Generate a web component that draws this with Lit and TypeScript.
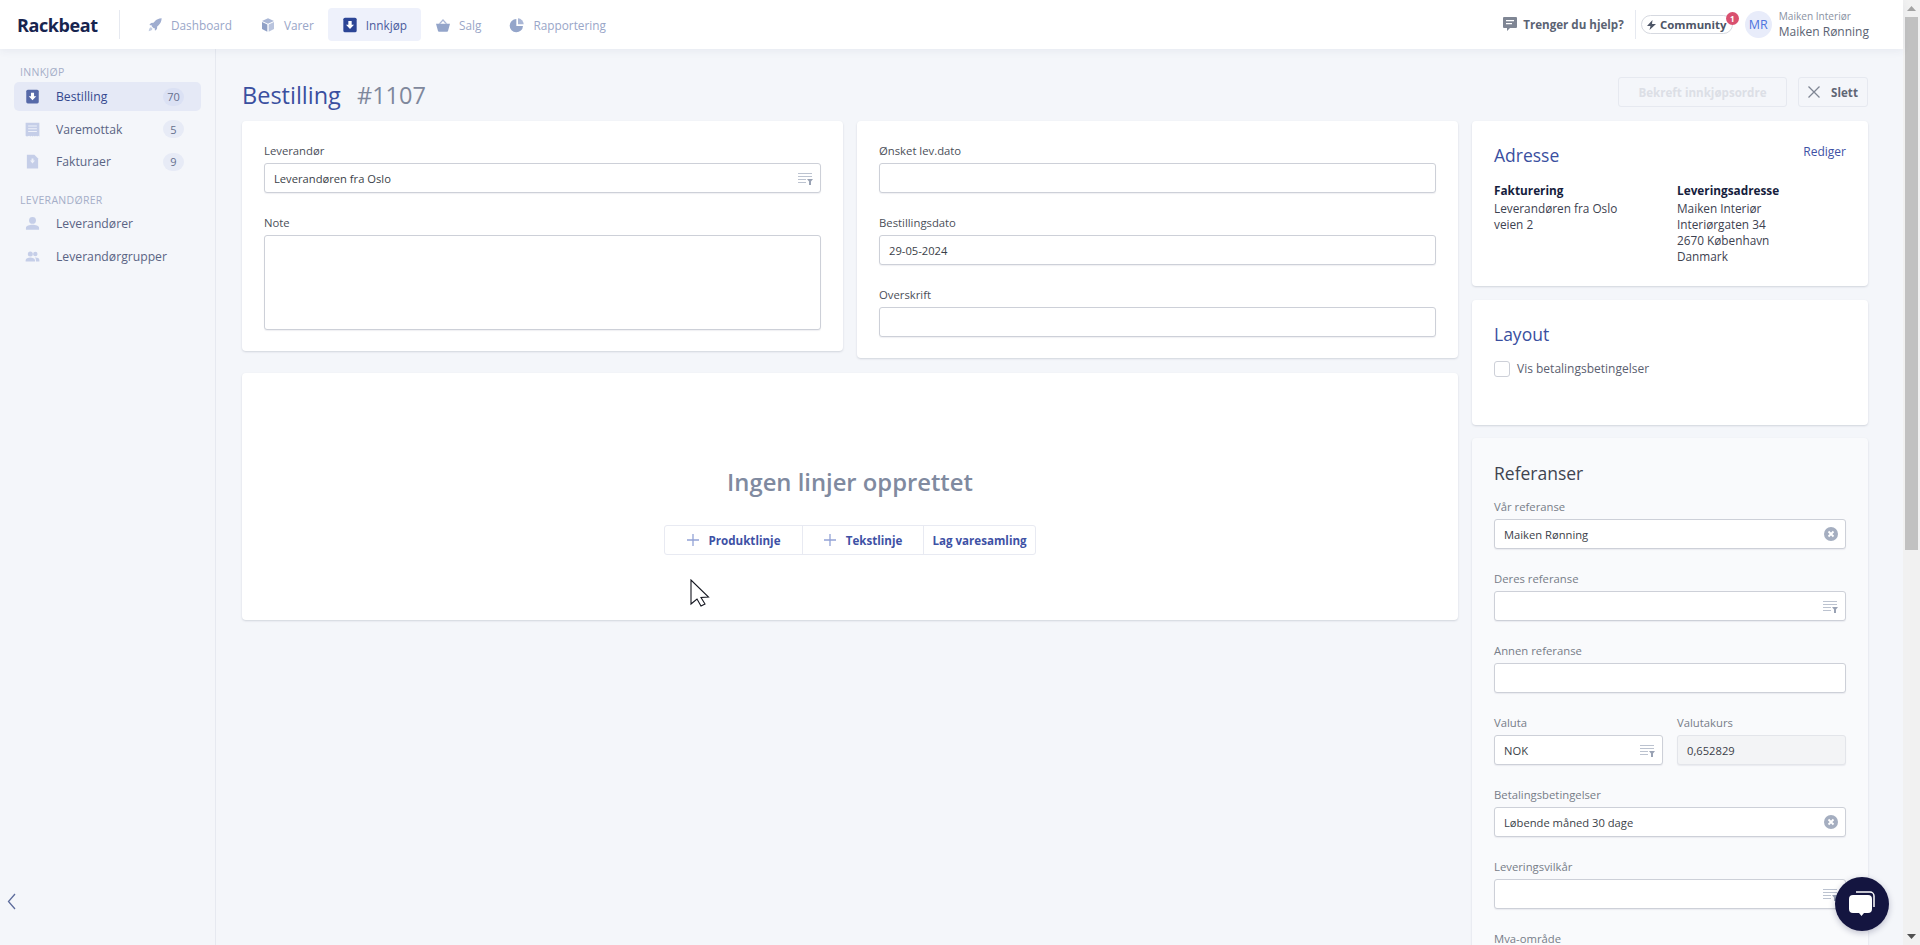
import { LitElement, html, css, svg } from "lit";
import { customElement } from "lit/decorators.js";

const icons: Record<string, any> = {
  rocket: svg`<path fill="#9fadd0" d="M22 2c-4.500.2-8 1.800-10.500 4.600L9.700 8.700 6 9 3.500 12l4 .6L7 14l3 3 1.400-.5.600 4 3-2.500.3-3.700 2.100-1.800C20.200 10 21.800 6.500 22 2z"/><path fill="#c3cde3" d="M6 15.500c-1.700.4-3 1.800-3.500 5.800 4-.5 5.400-1.800 5.800-3.500z"/>`,
  cube: svg`<path fill="#aab7d6" d="M12 2l9 4-9 4-9-4z"/><path fill="#8fa0c6" d="M3 7.500l8 3.600V22l-8-4z"/><path fill="#b9c4de" d="M21 7.500l-8 3.600V22l8-4z"/>`,
  order: svg`<rect x="2" y="1" width="20" height="22" rx="2.500" fill="currentColor"/><path fill="#fff" d="M9.500 6h5v5.500h3.500L12 18l-6-6.500h3.500z"/>`,
  basket: svg`<path fill="#aab7d6" d="M12 3l6.500 7h-2.700L12 6l-3.800 4H5.500z"/><path fill="#94a5ca" d="M1.500 10h21l-3 11a1.500 1.500 0 0 1-1.500 1H6a1.500 1.500 0 0 1-1.500-1z"/>`,
  pie: svg`<path fill="#94a5ca" d="M11 3v10.500h10A10 10 0 1 1 11 3z"/><path fill="#aab7d6" d="M13.500 2A9 9 0 0 1 22 11h-8.500z"/>`,
  receipt: svg`<path fill="#c5cee8" d="M1 1h22v22l-1.800-1-1.800 1-1.800-1-1.800 1-1.800-1-1.800 1-1.800-1-1.800 1-1.800-1L3 23l-2-1z"/><path fill="#eef1f9" d="M5 5.500h14V7H5zM5 10h14v1.500H5zM5 14.500h14V16H5z"/>`,
  doc: svg`<path fill="#c5cee8" d="M3 1h12l6 6v16H3z"/><path fill="#eef1f9" d="M10.500 7h3v3.500H16L12 15l-4-4.500h2.500z"/>`,
  person: svg`<circle cx="12" cy="7" r="5.500" fill="#c5cee8"/><path fill="#c5cee8" d="M1.500 22v-3c0-3.500 5.500-5 10.500-5s10.500 1.500 10.500 5v3z"/>`,
  people: svg`<circle cx="8.500" cy="8" r="4" fill="#c5cee8"/><circle cx="16.500" cy="8" r="3.500" fill="#c5cee8"/><path fill="#c5cee8" d="M1 20v-2c0-3 4-4.500 7.500-4.500S16 15 16 18v2zM17.500 20v-2.500c0-1.500-.6-2.800-1.800-3.800 3.500-.3 7.300 1 7.300 3.800V20z"/>`,
};

const ic = (name: string) => html`<svg class="ic" viewBox="0 0 24 24">${icons[name]}</svg>`;

const sortIcon = html`<svg class="sort" viewBox="0 0 16 13"><path fill="#bcc3d0" d="M1 1h14v1H1zM1 4h14v1H1zM1 7h8v1H1zM1 10h8v1H1z"/><path fill="#99a2b4" d="M10 7h6l-2 2.500V13h-2V9.500z"/></svg>`;
const clearIcon = html`<svg class="clear" viewBox="0 0 14 14"><circle cx="7" cy="7" r="7" fill="#a5aec0"/><path stroke="#fff" stroke-width="1.800" d="M4.500 4.500l5 5M9.500 4.500l-5 5"/></svg>`;
const plusIcon = html`<svg class="plus" viewBox="0 0 12 12"><path stroke="#93a3d6" stroke-width="1.300" d="M6 0v12M0 6h12"/></svg>`;

@customElement("app-root")
export class AppRoot extends LitElement {
  static styles = css`
    :host { display: block; height: 945px; overflow: hidden; font-family: "Open Sans", "Noto Sans", sans-serif; font-size: 12px; color: #333; background: #f4f6fa; position: relative; }
    * { box-sizing: border-box; }
    .shell { display: flex; height: 945px; }
    .page { flex: 1; min-width: 0; display: flex; flex-direction: column; }
    .scrollbar { width: 17px; background: #f1f1f1; display: flex; flex-direction: column; align-items: center; }
    .scrollbar .up { height: 17px; display: flex; align-items: center; justify-content: center; }
    .scrollbar .thumb { width: 13px; height: 533px; background: #c1c1c1; margin-bottom: auto; }
    .scrollbar .down { height: 17px; display: flex; align-items: center; justify-content: center; }
    .tri { width: 9px; height: 5px; }

    header { height: 49px; background: #fff; display: flex; align-items: center; box-shadow: 0 2px 8px rgba(60,70,110,.07); position: relative; z-index: 2; flex: none; padding-left: 17px; }
    .logo { font-family: "Open Sans", sans-serif; font-weight: 700; font-size: 18px; color: #17244f; width: 102px; letter-spacing: -.4px; }
    .vdiv { width: 1px; height: 29px; background: #e6e9f0; flex: none; }
    nav { display: flex; margin-left: 13px; }
    .nav-item { display: flex; align-items: center; height: 33px; padding: 0 14px; gap: 8px; color: #99a6c8; border-radius: 4px; font-size: 11.800px; }
    .nav-item .ic { width: 16px; height: 16px; }
    .nav-item.active { background: #eef1fb; color: #4a5a9c; }
    .nav-item.active .ic { color: #2c4596; }
    .spacer { flex: 1; }
    .help { display: flex; align-items: center; gap: 6px; font-weight: 700; color: #5b6373; font-size: 11.600px; margin-right: 11px; }
    .help svg { width: 14px; height: 15px; }
    .community { margin-left: 5px; height: 19px; width: 92px; border: 1px solid #d6d9e0; border-radius: 10px; display: flex; align-items: center; justify-content: center; gap: 4px; font-weight: 700; font-size: 11.400px; color: #4d5566; position: relative; }
    .community svg { width: 9px; height: 10px; }
    .cbadge { position: absolute; right: -7px; top: -4px; width: 13px; height: 13px; border-radius: 50%; background: #d9506f; color: #fff; font-size: 8px; font-weight: 700; display: flex; align-items: center; justify-content: center; }
    .avatar { width: 27px; height: 27px; border-radius: 50%; background: #e8ecfa; color: #4f74de; font-size: 12.500px; display: flex; align-items: center; justify-content: center; margin-left: 12px; flex: none; }
    .who { margin-left: 7px; margin-right: 34px; display: flex; flex-direction: column; color: #5b6373; }
    .who small { font-size: 10.100px; line-height: 14px; color: #8a92a3; }
    .who span { font-size: 12px; line-height: 18px; }

    .body { flex: 1; display: flex; min-height: 0; }
    aside { width: 216px; flex: none; border-right: 1px solid #e6e9f0; padding: 16px 14px 0; position: relative; }
    .sec { font-size: 10.500px; color: #a5aec8; line-height: 14px; padding-left: 6px; letter-spacing: .3px; margin-bottom: 3px; }
    .sec.two { margin-top: 17px; margin-bottom: 2px; }
    .item { display: flex; align-items: center; height: 29px; margin-bottom: 3.500px; padding-left: 11px; padding-right: 17px; border-radius: 5px; width: 187px; color: #5a6484; font-size: 12.200px; }
    .item .ic { width: 15px; height: 17px; margin-right: 16px; flex: none; color: #5669a8; }
    .item.active { background: #e5e9f6; color: #34488f; }
    .item .badge { margin-left: auto; width: 21px; height: 18px; border-radius: 9px; background: #e7ebf6; color: #66708e; font-size: 11px; display: flex; align-items: center; justify-content: center; }
    .item.active .badge { background: #dbe1f4; }
    .collapse { position: absolute; left: 7px; bottom: 35px; width: 9px; height: 17px; }

    main { flex: 1; min-width: 0; padding: 28px 35px 0 26px; display: flex; flex-direction: column; overflow: hidden; }
    .top { display: flex; align-items: center; height: 30px; margin-bottom: 14px; }
    h1 { margin: 0; padding-top: 5px; font-size: 23.500px; font-weight: 400; color: #3a4f9f; flex: 1; }
    h1 span { color: #7f889c; margin-left: 10px; }
    .btn { height: 30px; border: 1px solid #e6e9f0; border-radius: 3px; display: flex; align-items: center; justify-content: center; font-weight: 700; font-size: 11.600px; color: #5f6675; }
    .btn.confirm { width: 169px; color: #dcdfe6; margin-right: 11px; }
    .btn.del { width: 70px; gap: 11px; }
    .btn.del svg { width: 12px; height: 12px; }

    .grid { display: grid; grid-template-columns: 1216px 396px; column-gap: 14px; }
    .left { display: flex; flex-direction: column; }
    .pair { display: grid; grid-template-columns: 601px 601px; column-gap: 14px; align-items: start; margin-bottom: 15px; }
    .card { background: #fff; border-radius: 4px; box-shadow: 0 1px 2px rgba(50,60,90,.18); padding: 21px 22px 0; }
    .card.c1 { height: 230px; }
    .card.c2 { height: 237px; }
    .empty { height: 247px; padding: 0; display: flex; flex-direction: column; align-items: center; }
    .empty h2 { margin: 91px 0 0; font-size: 23.800px; font-weight: 600; color: #808aa0; line-height: 36px; }
    .group { display: flex; margin-top: 25px; border: 1px solid #e8eaf2; border-radius: 3px; height: 30px; width: 372px; }
    .group div { display: flex; align-items: center; justify-content: center; gap: 10px; font-weight: 700; color: #3e51a5; font-size: 11.600px; border-right: 1px solid #e8eaf2; }
    .group div:last-child { border-right: none; }
    .group .a { width: 138px; } .group .b { width: 121px; } .group .c { flex: 1; }
    .plus { width: 12px; height: 12px; }

    .field { margin-bottom: 21px; }
    .field label { display: block; height: 18px; line-height: 18px; margin-bottom: 3px; font-size: 11.300px; color: #4b4f59; }
    .right .field label { color: #777d88; }
    .input { height: 30px; border: 1px solid #cdd0d8; border-radius: 3px; background: #fff; display: flex; align-items: center; padding: 0 7px 0 9px; box-shadow: 0 1px 1px rgba(60,70,100,.08); color: #3b3f49; font-size: 11.200px; }
    .input.disabled { background: #f3f4f6; border-color: #e3e5ea; }
    .input.area { height: 95px; }
    .input .sort { width: 16px; height: 13px; margin-left: auto; }
    .input .clear { width: 14px; height: 14px; margin-left: auto; }

    .right { display: flex; flex-direction: column; gap: 14px; }
    .card.r { padding: 0 22px; }
    .addr { height: 165px; position: relative; }
    .r h3 { margin: 0; font-weight: 400; font-size: 17.500px; color: #3a4f9f; line-height: 24px; }
    .addr-head { display: flex; justify-content: space-between; padding-top: 22px; }
    .addr-head a { color: #3e51a5; font-size: 12px; line-height: 18px; }
    .cols { display: grid; grid-template-columns: 183px 1fr; margin-top: 15px; line-height: 16px; font-size: 11.800px; color: #3d4250; }
    .cols b { display: block; color: #161d3d; line-height: 16px; margin-bottom: 2px; }
    .layout { height: 125px; padding-top: 22px !important; }
    .check { display: flex; align-items: center; gap: 7px; margin-top: 14px; font-size: 12px; color: #5b6070; }
    .check i { width: 16px; height: 16px; border: 1px solid #cdd0d8; border-radius: 3px; background: #fff; }
    .refs { background: #f9fafc; padding-top: 23px !important; height: 700px; margin-top: -1px; }
    .refs h3 { color: #3f4450; margin-bottom: 13px; }
    .duo { display: grid; grid-template-columns: 169px 169px; column-gap: 14px; }

    .cursor { position: absolute; left: 690px; top: 579px; width: 20px; height: 28px; z-index: 5; }
    .chat { position: absolute; left: 1835px; top: 877px; width: 54px; height: 54px; border-radius: 50%; background: #141540; display: flex; align-items: center; justify-content: center; z-index: 5; box-shadow: 0 2px 6px rgba(20,21,64,.25); }
    .chat svg { width: 30px; height: 30px; }
  `;

  field(label: string, value = "", kind: "" | "sort" | "clear" | "disabled" = "") {
    return html`<div class="field"><label>${label}</label><div class="input ${kind === "disabled" ? "disabled" : ""}"><span>${value}</span>${kind === "sort" ? sortIcon : kind === "clear" ? clearIcon : ""}</div></div>`;
  }

  render() {
    return html`
      <div class="shell">
        <div class="page">
          <header>
            <div class="logo">Rackbeat</div>
            <div class="vdiv"></div>
            <nav>
              <div class="nav-item">${ic("rocket")}Dashboard</div>
              <div class="nav-item">${ic("cube")}Varer</div>
              <div class="nav-item active">${ic("order")}Innkjøp</div>
              <div class="nav-item">${ic("basket")}Salg</div>
              <div class="nav-item">${ic("pie")}Rapportering</div>
            </nav>
            <div class="spacer"></div>
            <div class="help"><svg viewBox="0 0 14 15"><path fill="#7f8694" d="M1 0h12a1 1 0 0 1 1 1v9a1 1 0 0 1-1 1H7l-3 3v-3H1a1 1 0 0 1-1-1V1a1 1 0 0 1 1-1z"/><path fill="#fff" d="M3 3h8v1.300H3zM3 6h6v1.300H3z"/></svg>Trenger du hjelp?</div>
            <div class="vdiv"></div>
            <div class="community"><svg viewBox="0 0 9 10"><path fill="#4d5566" d="M5.500 0L0 6h3.500L2.500 10 9 4H5z"/></svg>Community<span class="cbadge">1</span></div>
            <div class="avatar">MR</div>
            <div class="who"><small>Maiken Interiør</small><span>Maiken Rønning</span></div>
          </header>
          <div class="body">
            <aside>
              <div class="sec">INNKJØP</div>
              <div class="item active">${ic("order")}Bestilling<span class="badge">70</span></div>
              <div class="item">${ic("receipt")}Varemottak<span class="badge">5</span></div>
              <div class="item">${ic("doc")}Fakturaer<span class="badge">9</span></div>
              <div class="sec two">LEVERANDØRER</div>
              <div class="item">${ic("person")}Leverandører</div>
              <div class="item">${ic("people")}Leverandørgrupper</div>
              <svg class="collapse" viewBox="0 0 9 17"><path fill="none" stroke="#5d6c9c" stroke-width="1.300" d="M8 1L1.500 8.500 8 16"/></svg>
            </aside>
            <main>
              <div class="top">
                <h1>Bestilling <span>#1107</span></h1>
                <div class="btn confirm">Bekreft innkjøpsordre</div>
                <div class="btn del"><svg viewBox="0 0 12 12"><path stroke="#7f8694" stroke-width="1.300" d="M.5.500l11 11M11.500.500l-11 11"/></svg>Slett</div>
              </div>
              <div class="grid">
                <div class="left">
                  <div class="pair">
                    <div class="card c1">
                      ${this.field("Leverandør", "Leverandøren fra Oslo", "sort")}
                      <div class="field"><label>Note</label><div class="input area"></div></div>
                    </div>
                    <div class="card c2">
                      ${this.field("Ønsket lev.dato")}
                      ${this.field("Bestillingsdato", "29-05-2024")}
                      ${this.field("Overskrift")}
                    </div>
                  </div>
                  <div class="card empty">
                    <h2>Ingen linjer opprettet</h2>
                    <div class="group">
                      <div class="a">${plusIcon}Produktlinje</div>
                      <div class="b">${plusIcon}Tekstlinje</div>
                      <div class="c">Lag varesamling</div>
                    </div>
                  </div>
                </div>
                <div class="right">
                  <div class="card r addr">
                    <div class="addr-head"><h3>Adresse</h3><a>Rediger</a></div>
                    <div class="cols">
                      <div><b>Fakturering</b>Leverandøren fra Oslo<br />veien 2</div>
                      <div><b>Leveringsadresse</b>Maiken Interiør<br />Interiørgaten 34<br />2670 København<br />Danmark</div>
                    </div>
                  </div>
                  <div class="card r layout">
                    <h3>Layout</h3>
                    <div class="check"><i></i>Vis betalingsbetingelser</div>
                  </div>
                  <div class="card r refs">
                    <h3>Referanser</h3>
                    ${this.field("Vår referanse", "Maiken Rønning", "clear")}
                    ${this.field("Deres referanse", "", "sort")}
                    ${this.field("Annen referanse")}
                    <div class="duo">
                      ${this.field("Valuta", "NOK", "sort")}
                      ${this.field("Valutakurs", "0,652829", "disabled")}
                    </div>
                    ${this.field("Betalingsbetingelser", "Løbende måned 30 dage", "clear")}
                    ${this.field("Leveringsvilkår", "", "sort")}
                    ${this.field("Mva-område")}
                  </div>
                </div>
              </div>
            </main>
          </div>
        </div>
        <div class="scrollbar">
          <div class="up"><svg class="tri" viewBox="0 0 9 5"><path fill="#a3a3a3" d="M4.500 0L9 5H0z"/></svg></div>
          <div class="thumb"></div>
          <div class="down"><svg class="tri" viewBox="0 0 9 5"><path fill="#505050" d="M0 0h9L4.500 5z"/></svg></div>
        </div>
      </div>
      <svg class="cursor" viewBox="0 0 20 28"><path fill="#fff" stroke="#141620" stroke-width="1.100" d="M1 1v24l6-5 4 7 4-2-4-6.500 7.500-.5z"/></svg>
      <div class="chat"><svg viewBox="0 0 30 30"><path fill="none" stroke="#fff" stroke-width="1.500" d="M9 3h14a4 4 0 0 1 4 4v11"/><path fill="#fff" d="M6 6h15a4 4 0 0 1 4 4v10a4 4 0 0 1-4 4h-4l-2.500 3-2.500-3H6a4 4 0 0 1-4-4V10a4 4 0 0 1 4-4z"/></svg></div>
    `;
  }
}
